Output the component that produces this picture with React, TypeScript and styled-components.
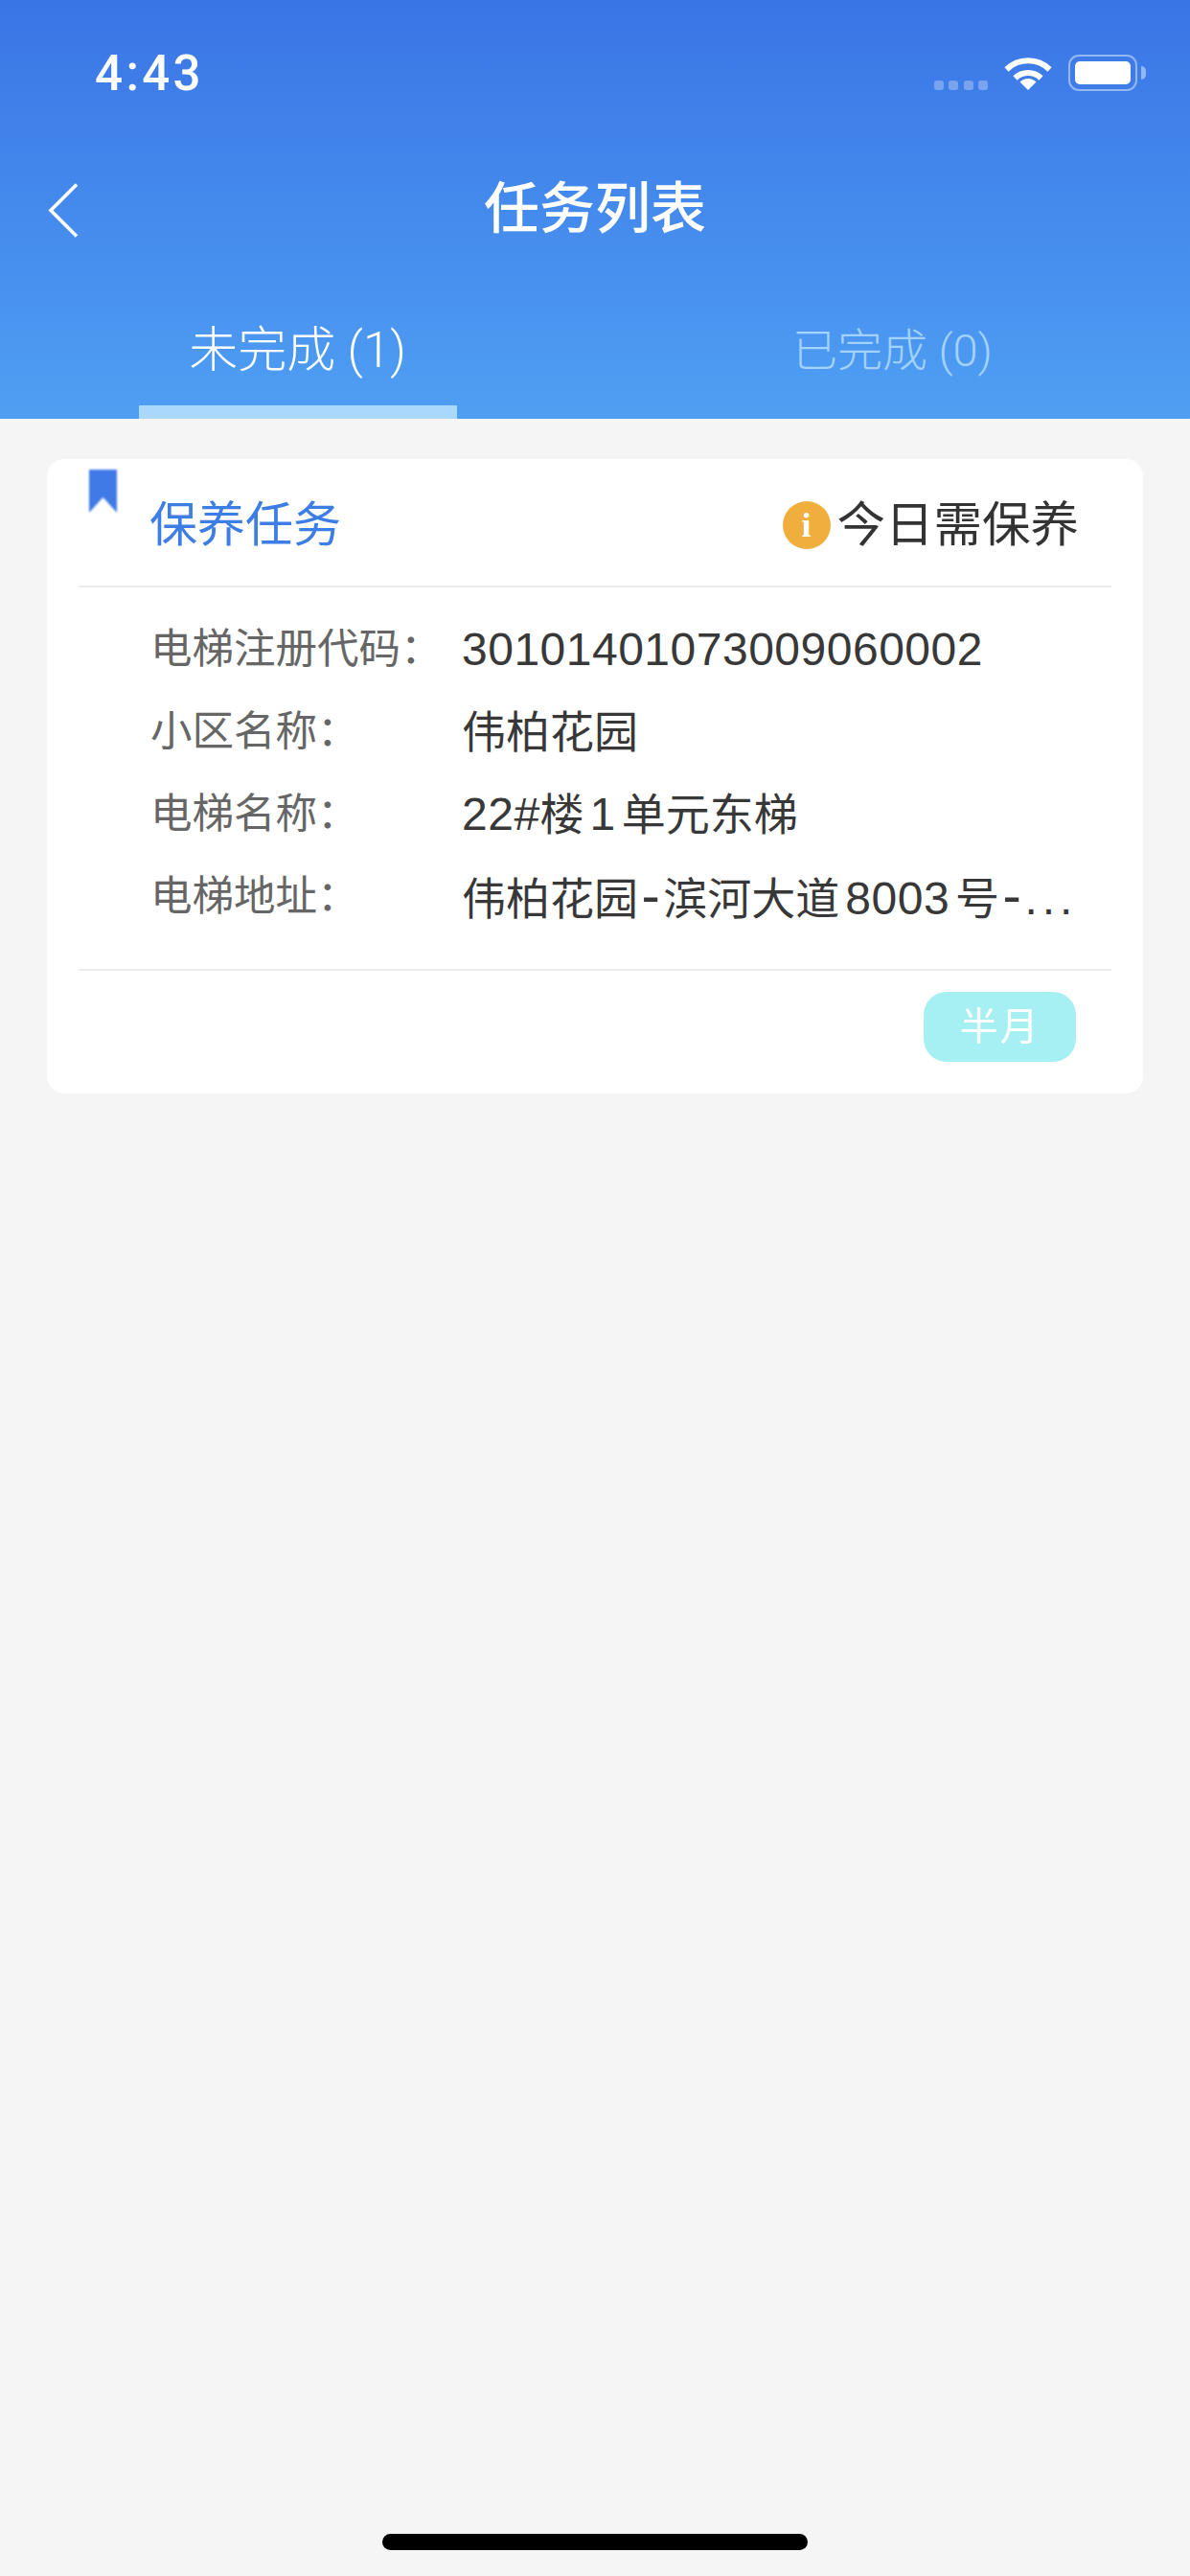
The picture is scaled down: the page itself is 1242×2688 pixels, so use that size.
import React from "react";
import styled, { createGlobalStyle } from "styled-components";

const GlobalStyle = createGlobalStyle`
  html, body {
    margin: 0;
    padding: 0;
    background: #f5f5f5;
    font-family: "Liberation Sans", "Noto Sans CJK SC", sans-serif;
  }
  * { box-sizing: border-box; }
`;

const Page = styled.div`
  width: 1242px;
  height: 2688px;
  display: flex;
  flex-direction: column;
  background: #f5f5f5;
  overflow: hidden;
`;

const Header = styled.header`
  height: 437px;
  display: flex;
  flex-direction: column;
  background: linear-gradient(180deg, #3a75e6 0%, #4f9ff3 100%);
`;

const StatusBar = styled.div`
  height: 96px;
  padding: 55px 55px 0 99px;
  display: flex;
  justify-content: space-between;
  align-items: flex-start;
`;

const Time = styled.span`
  font-family: Roboto, "Liberation Sans", sans-serif;
  font-size: 51px;
  line-height: 44px;
  font-weight: 500;
  letter-spacing: 3.4px;
  color: #fff;
`;

const StatusIcons = styled.div`
  display: flex;
  align-items: flex-start;
  margin-top: 2px;
`;

const SignalDots = styled.div`
  display: flex;
  gap: 5.5px;
  margin: 27px 17px 0 0;
`;

const SignalDot = styled.i`
  width: 10px;
  height: 10px;
  border-radius: 3px;
  background: rgba(255, 255, 255, 0.3);
`;

const Battery = styled.div`
  position: relative;
  width: 72px;
  height: 38px;
  margin-left: 17px;
  padding: 5px;
  border: 2px solid rgba(255, 255, 255, 0.45);
  border-radius: 11px;

  &::before {
    content: "";
    display: block;
    height: 100%;
    border-radius: 5px;
    background: #fff;
  }

  &::after {
    content: "";
    position: absolute;
    top: 10px;
    right: -11px;
    width: 5px;
    height: 14px;
    border-radius: 0 6px 6px 0;
    background: rgba(255, 255, 255, 0.45);
  }
`;

const NavBar = styled.div`
  height: 84px;
  margin-top: 75px;
  position: relative;
  display: flex;
  align-items: center;
  justify-content: center;
`;

const BackButton = styled.button`
  position: absolute;
  left: 50px;
  top: 20px;
  padding: 0;
  border: 0;
  background: none;
  display: flex;
`;

const Title = styled.h1`
  margin: 0;
  font-family: "Noto Sans CJK SC", sans-serif;
  font-size: 58px;
  line-height: 84px;
  font-weight: 500;
  color: #fff;
`;

const Tabs = styled.div`
  flex: 1;
  display: flex;
`;

const Tab = styled.div`
  flex: 1;
  display: flex;
  flex-direction: column;
  align-items: center;
  justify-content: flex-end;
`;

const TabLabel = styled.span<{ $active?: boolean }>`
  font-family: Roboto, "Noto Sans CJK SC", sans-serif;
  font-size: ${(p) => (p.$active ? "51px" : "47px")};
  line-height: 60px;
  margin-bottom: 27px;
  color: ${(p) => (p.$active ? "#fff" : "#a3d2fa")};
  font-weight: 300;
  white-space: nowrap;
`;

const TabLine = styled.div<{ $active?: boolean }>`
  width: 332px;
  height: 14px;
  background: ${(p) => (p.$active ? "#aad8fc" : "transparent")};
`;

const Card = styled.section`
  position: relative;
  margin: 42px 49px 0;
  height: 662px;
  border-radius: 18px;
  background: #fff;
  display: flex;
  flex-direction: column;
`;

const Bookmark = styled.svg`
  position: absolute;
  left: 44px;
  top: 11px;
  filter: blur(0.8px);
`;

const CardHead = styled.div`
  height: 132px;
  padding: 6px 67px 0 107px;
  display: flex;
  align-items: center;
  justify-content: space-between;
`;

const CardTitle = styled.span`
  font-size: 50px;
  color: #3d7ee6;
  line-height: 60px;
`;

const Due = styled.div`
  display: flex;
  align-items: center;
  gap: 7px;
  font-size: 50.5px;
  color: #333;
  line-height: 60px;
`;

const InfoDot = styled.span`
  width: 50px;
  height: 50px;
  border-radius: 50%;
  background: #f0ae3c;
  color: #fff;
  display: flex;
  align-items: center;
  justify-content: center;
  font-family: "Liberation Serif", serif;
  font-weight: 700;
  font-size: 36px;
  line-height: 50px;
`;

const Divider = styled.hr`
  height: 2px;
  margin: 0 33px;
  border: 0;
  background: #eeeeee;
  flex-shrink: 0;
`;

const Rows = styled.div`
  height: 398px;
  padding: 22px 50px 0 108px;
  display: flex;
  flex-direction: column;
`;

const Row = styled.div`
  height: 86px;
  display: flex;
  align-items: center;
`;

const Label = styled.span`
  width: 325px;
  flex-shrink: 0;
  margin-top: -3px;
  font-size: 43.5px;
  line-height: 60px;
  color: #666;
  white-space: nowrap;
`;

const Value = styled.span`
  font-size: 46px;
  line-height: 60px;
  color: #383838;
  white-space: nowrap;
`;

const Num = styled.span<{ $gap?: boolean }>`
  font-size: 48px;
  letter-spacing: 0.5px;
  margin: ${(p) => (p.$gap ? "0 6px" : "0")};
`;

const Dash = styled.span`
  font-size: 58px;
  line-height: 1;
  margin: 0 3.5px;
`;

const More = styled.span`
  font-size: 48px;
  letter-spacing: 5px;
`;

const CardFoot = styled.div`
  flex: 1;
  padding: 22px 70px 0 0;
  display: flex;
  justify-content: flex-end;
  align-items: flex-start;
`;

const Tag = styled.span`
  width: 159px;
  height: 73px;
  border-radius: 24px;
  background: #a6f0f3;
  color: #fff;
  font-size: 40px;
  letter-spacing: 2px;
  font-weight: 400;
  line-height: 73px;
  text-align: center;
`;

const HomeBar = styled.div`
  width: 444px;
  height: 17px;
  margin: auto auto 27px;
  border-radius: 9px;
  background: #000;
`;

const WifiIcon = () => (
  <svg width="50" height="37" viewBox="0 0 50 37" fill="none" stroke="#fff" strokeWidth="6">
    <path d="M2.5 15.5A32 32 0 0 1 47.5 15.5" />
    <path d="M11.5 24.5A19.5 19.5 0 0 1 38.5 24.5" />
    <path d="M25 37L16.5 28.5A12 12 0 0 1 33.5 28.5Z" fill="#fff" stroke="none" />
  </svg>
);

const BackIcon = () => (
  <svg width="32" height="57" viewBox="0 0 32 57" fill="none" stroke="#fff" strokeWidth="3.6">
    <path d="M30 1.5L3 28.5L30 55.5" strokeLinejoin="miter" />
  </svg>
);

const rows: { label: string; value: React.ReactNode }[] = [
  { label: "电梯注册代码：", value: <Num>30101401073009060002</Num> },
  { label: "小区名称：", value: "伟柏花园" },
  {
    label: "电梯名称：",
    value: (
      <>
        <Num>22#</Num>楼<Num $gap>1</Num>单元东梯
      </>
    ),
  },
  {
    label: "电梯地址：",
    value: (
      <>
        伟柏花园<Dash>-</Dash>滨河大道<Num $gap>8003</Num>号<Dash>-</Dash>
        <More>...</More>
      </>
    ),
  },
];

export default function App() {
  return (
    <Page>
      <GlobalStyle />
      <Header>
        <StatusBar>
          <Time>4:43</Time>
          <StatusIcons>
            <SignalDots>
              <SignalDot />
              <SignalDot />
              <SignalDot />
              <SignalDot />
            </SignalDots>
            <WifiIcon />
            <Battery />
          </StatusIcons>
        </StatusBar>
        <NavBar>
          <BackButton>
            <BackIcon />
          </BackButton>
          <Title>任务列表</Title>
        </NavBar>
        <Tabs>
          <Tab>
            <TabLabel $active>未完成 (1)</TabLabel>
            <TabLine $active />
          </Tab>
          <Tab>
            <TabLabel>已完成 (0)</TabLabel>
            <TabLine />
          </Tab>
        </Tabs>
      </Header>
      <Card>
        <Bookmark width="29" height="45" viewBox="0 0 29 45">
          <polygon points="0,0 29,0 29,45 14.5,29 0,45" fill="#3f7ae6" />
        </Bookmark>
        <CardHead>
          <CardTitle>保养任务</CardTitle>
          <Due>
            <InfoDot>i</InfoDot>
            今日需保养
          </Due>
        </CardHead>
        <Divider />
        <Rows>
          {rows.map((row) => (
            <Row key={row.label}>
              <Label>{row.label}</Label>
              <Value>{row.value}</Value>
            </Row>
          ))}
        </Rows>
        <Divider />
        <CardFoot>
          <Tag>半月</Tag>
        </CardFoot>
      </Card>
      <HomeBar />
    </Page>
  );
}
